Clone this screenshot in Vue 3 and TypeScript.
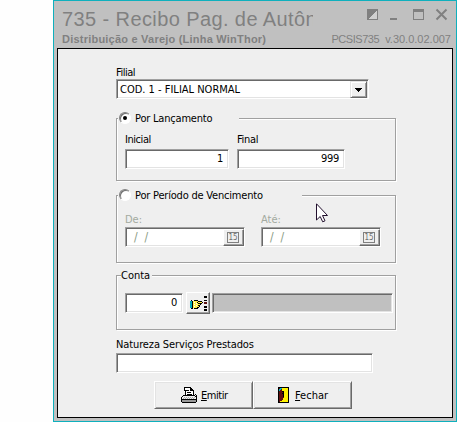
<script setup lang="ts">
import { ref } from 'vue'

const mode = ref<'lancamento' | 'periodo'>('lancamento')
const inicial = ref('1')
const final = ref('999')
const conta = ref('0')
const dates = [{ label: 'De:' }, { label: 'Até:' }]
</script>

<template>
  <main class="desktop">
    <section class="window">
      <header class="titlebar">
        <div class="title-row">
          <h1 class="title">735 - Recibo Pag. de Autôn</h1>
          <svg class="controls" width="82" height="14" viewBox="0 0 82 14" shape-rendering="crispEdges">
            <path d="M0.5 1.5h10v10h-10z" fill="#d0d0d0" stroke="#808080" />
            <path d="M0 1h11L0 12z" fill="#808080" />
            <path d="M23 10h7v2h-7z" fill="#808080" />
            <path d="M46 1h11v11h-11zM47 4v7h9v-7z" fill="#808080" fill-rule="evenodd" />
            <path d="M69.500 1.500l10 10M79.500 1.500l-10 10" stroke="#808080" stroke-width="2" shape-rendering="auto" />
          </svg>
        </div>
        <div class="sub-row">
          <span class="product">Distribuição e Varejo (Linha WinThor)</span>
          <span class="version"><span class="code">PCSIS735</span><span>v.30.0.02.007</span></span>
        </div>
      </header>

      <form class="panel" @submit.prevent>
        <label class="text lbl-filial">Filial</label>
        <div class="sunken combo">
          <span class="text combo-value">COD. 1 - FILIAL NORMAL</span>
          <span class="drop">
            <svg width="7" height="4" viewBox="0 0 7 4" shape-rendering="crispEdges"><path d="M0 0h7v1h-1v1h-1v1h-1v1h-1v-1h-1v-1h-1v-1h-1z" /></svg>
          </span>
        </div>

        <section class="group g-lanc">
          <div class="legend leg-lanc" @click="mode = 'lancamento'">
            <span class="radio" :class="{ on: mode === 'lancamento' }"></span>
            <span class="text t-lanc">Por Lançamento</span>
          </div>
          <div class="fields">
            <div class="field f-inicial">
              <span class="text t-inicial">Inicial</span>
              <div class="sunken number"><span class="text">{{ inicial }}</span></div>
            </div>
            <div class="field f-final">
              <span class="text t-final">Final</span>
              <div class="sunken number"><span class="text">{{ final }}</span></div>
            </div>
          </div>
        </section>

        <section class="group g-per">
          <div class="legend leg-per" @click="mode = 'periodo'">
            <span class="radio" :class="{ on: mode === 'periodo' }"></span>
            <span class="text t-per">Por Período de Vencimento</span>
          </div>
          <div class="dates">
            <div v-for="d in dates" :key="d.label" class="field f-date">
              <span class="text disabled">{{ d.label }}</span>
              <div class="sunken date">
                <span class="text mask">/ &nbsp;/</span>
                <span class="raised cal"><span class="day">15</span></span>
              </div>
            </div>
          </div>
        </section>

        <section class="group g-conta">
          <div class="legend leg-conta"><span class="text t-conta">Conta</span></div>
          <div class="conta-row">
            <div class="sunken number conta-num"><span class="text">{{ conta }}</span></div>
            <button type="button" class="raised pick" aria-label="Conta">
              <svg width="17" height="15" viewBox="0 0 17 15" shape-rendering="crispEdges">
                <path d="M3 5h5v1h5v1h-3v4h-1v1h-6z" fill="#fff04a" />
                <path d="M0 5h2v7h-2z" fill="#00a8b8" />
                <path d="M2 5h1v7h-1zM1 4h1v1h-1zM1 12h2v1h-2zM4 4h4v1h-4zM8 5h4v1h-4zM12 6h1v1h-1zM8 7h4v1h-4zM10 8h1v1h-1zM8 9h2v1h-2zM9 10h1v1h-1zM7 11h2v1h-2zM4 12h4v1h-4zM7 6h1v1h-1z" />
                <path d="M4 6h1v1h-1zM6 7h1v1h-1zM4 8h1v1h-1zM6 9h1v1h-1zM4 10h1v1h-1z" fill="#fff" />
                <path d="M14 0h3v2h-3zM14 4h3v1h-3zM14 10h3v2h-3zM14 13h3v2h-3z" />
                <path d="M14 6h3v2h-3z" fill="#5a1414" />
              </svg>
            </button>
            <div class="sunken readonly"></div>
          </div>
        </section>

        <label class="text lbl-nat">Natureza Serviços Prestados</label>
        <div class="sunken natureza"></div>

        <div class="actions">
          <button type="button" class="action">
            <svg width="16" height="16" viewBox="0 0 16 16" shape-rendering="crispEdges">
              <path d="M3 1h7l2 2v5h-8z" fill="#fff" />
              <path d="M3 0h7v1h1v1h1v1h1v5h-1v-4h-3v-3h-5v2h1v5h-1v-4h-1zM5 3h3v1h-3zM6 5h4v1h-4zM6 7h5v1h-5z" />
              <path d="M1 9h13v3h-13z" fill="#eee" />
              <path d="M2 8h12v1h-12zM1 9h1v1h-1zM0 10h1v5h-1zM14 9h1v1h-1zM15 8h1v7h-1zM1 12h14v1h-14zM1 15h14v1h-14zM14 7h1v1h-1z" />
              <path d="M1 13h14v2h-14z" fill="#999" />
              <path d="M3 10h1v1h-1zM5 10h1v1h-1zM7 10h1v1h-1zM9 10h1v1h-1zM11 10h1v1h-1zM13 10h1v1h-1zM2 11h1v1h-1zM4 11h1v1h-1zM6 11h1v1h-1zM8 11h1v1h-1zM10 11h1v1h-1zM12 11h1v1h-1z" fill="#aaa" />
            </svg>
            <span class="text t-emitir"><u>E</u>mitir</span>
          </button>
          <button type="button" class="action close">
            <svg width="11" height="16" viewBox="0 0 11 16" shape-rendering="crispEdges">
              <path d="M0 0h11v16h-11z" />
              <path d="M1 1h9v14h-9z" fill="#fff200" />
              <path d="M1 1h3v3h2v7h-1v2h-1v1h-2v1h-1z" fill="#601010" />
              <path d="M2 1h2v1h-1v1h-1v1h-1v-2h1z" fill="#00b7c4" />
              <path d="M4 4h2v1h-2zM5 5h1v5h-1zM4 6h1v1h-1z" />
            </svg>
            <span class="text t-fechar"><u>F</u>echar</span>
          </button>
        </div>
      </form>
    </section>

    <svg class="cursor" width="13" height="20" viewBox="0 0 13 20">
      <path d="M.5 .8v16.200l3.700-3.500 2.500 5.300 2.300-1-2.500-5.300h5z" fill="#fff" stroke="#22102e" />
    </svg>
  </main>
</template>

<style>
body { margin: 0; background: #fff; }
</style>

<style scoped>
* { box-sizing: border-box; }
.desktop { position: relative; width: 457px; height: 422px; padding-left: 53px; background: #fefefe; overflow: hidden; }
.window { width: 404px; height: 422px; padding: 0 3px 3px; border: 1px solid #0fb0bd; background: #c0c0c0; }
.titlebar { height: 47px; padding: 6px 2px 0 5px; color: #808080; font-family: "Liberation Sans", Arial, sans-serif; }
.title-row { display: flex; height: 25px; }
.title { width: 251px; margin: 0; overflow: hidden; white-space: nowrap; font-size: 20px; line-height: 25px; font-weight: 400; letter-spacing: .4px; }
.controls { margin: 1px 0 0 54px; }
.sub-row { display: flex; justify-content: space-between; font-size: 11px; line-height: 14px; white-space: nowrap; }
.product { font-weight: 700; letter-spacing: .22px; }
.version { display: flex; gap: 6px; }
.code { letter-spacing: -.45px; }
.panel { width: 396px; height: 370px; padding: 16px 0 0 58px; border: 1px solid #000; background: #efefef; }
.text { font-family: "DejaVu Sans Condensed", "DejaVu Sans", Tahoma, sans-serif; font-stretch: condensed; font-size: 11px; line-height: 14px; color: #000; white-space: nowrap; }
.lbl-filial, .lbl-nat { display: block; height: 14px; }
.lbl-filial { line-height: 16px; letter-spacing: -.5px; }
.sunken { border: 1px solid; border-color: #a0a0a0 #fff #fff #a0a0a0; box-shadow: inset 1px 1px #696969, inset -1px -1px #e3e3e3; background: #fff; }
.raised { border: 1px solid; border-color: #fff #696969 #696969 #fff; box-shadow: inset -1px -1px #a0a0a0; background: #efefef; }
.combo { display: flex; justify-content: space-between; width: 253px; height: 20px; padding: 1px 1px 1px 3px; }
.combo-value { line-height: 18px; }
.drop { display: flex; align-items: center; justify-content: center; width: 17px; height: 17px; border: 1px solid; border-color: #e3e3e3 #696969 #696969 #e3e3e3; box-shadow: inset 1px 1px #fff, inset -1px -1px #a0a0a0; background: #efefef; }
.group { width: 280px; border: 1px solid #a0a0a0; box-shadow: 1px 1px #fff, inset 1px 1px #fff; }
.g-lanc { height: 63px; margin-top: 19px; }
.g-per { height: 68px; margin-top: 14px; }
.g-conta { height: 55px; margin-top: 12px; }
.legend { display: flex; align-items: center; height: 14px; margin-top: -8px; background: #efefef; }
.legend .text { padding-top: 2px; }
.leg-lanc { width: 121px; margin-left: 1px; padding-left: 1px; }
.leg-per { width: 184px; margin-left: 1px; padding-left: 1px; }
.leg-conta { width: 31px; margin-left: 4px; }
.t-lanc, .t-per { letter-spacing: -.2px; }
.t-inicial, .t-emitir { letter-spacing: -.45px; }
.t-final { letter-spacing: -.3px; }
.lbl-nat { letter-spacing: -.12px; }
.radio { display: flex; align-items: center; justify-content: center; flex: none; width: 12px; height: 12px; margin-right: 4px; border: 1px solid; border-color: #808080 #fff #fff #808080; border-radius: 50%; background: #fff; box-shadow: inset 1px 1px #707070; }
.radio.on::after { content: ""; width: 4px; height: 4px; border-radius: 50%; background: #000; }
.fields { display: flex; gap: 8px; padding: 8px 0 0 8px; }
.field { display: flex; flex-direction: column; }
.f-inicial { width: 104px; }
.f-final { width: 108px; }
.number { display: flex; justify-content: flex-end; height: 20px; margin-top: 2px; padding: 0 5px; }
.number .text { line-height: 18px; letter-spacing: -.3px; }
.dates { display: flex; gap: 16px; padding: 11px 0 0 8px; }
.f-date { width: 120px; }
.disabled { color: #a3aaa0; }
.date { display: flex; justify-content: space-between; height: 20px; padding: 1px 0 1px 8px; }
.mask { color: #8a9b85; font-size: 12px; line-height: 16px; }
.cal { display: flex; align-items: center; justify-content: center; width: 21px; height: 17px; padding-right: 1px; }
.day { width: 12px; height: 11px; border: 1px solid #808080; color: #707070; font: 8px/9px "DejaVu Sans Condensed", "DejaVu Sans", sans-serif; text-align: center; }
.conta-row { display: flex; align-items: flex-start; padding: 11px 0 0 8px; }
.conta-num { width: 58px; }
.conta-num, .readonly { margin-top: 0; }
.pick { display: flex; align-items: center; justify-content: center; width: 24px; height: 22px; margin: -1px 2px 0 3px; padding: 0; }
.readonly { width: 181px; height: 20px; background: #c0c0c0; }
.lbl-nat { margin-top: 8px; }
.natureza { width: 257px; height: 20px; margin-top: 1px; }
.actions { display: flex; margin: 8px 0 0 38px; }
.action { display: flex; align-items: center; width: 99px; height: 28px; padding: 0 0 1px 26px; gap: 4px; border: 1px solid; border-color: #fff #696969 #696969 #fff; box-shadow: inset 1px 1px #e3e3e3, inset -1px -1px #a0a0a0; background: #efefef; }
.close { padding-left: 24px; gap: 6px; }
.action .text { padding-top: 3px; }
.cursor { position: absolute; left: 316px; top: 203px; }
</style>
